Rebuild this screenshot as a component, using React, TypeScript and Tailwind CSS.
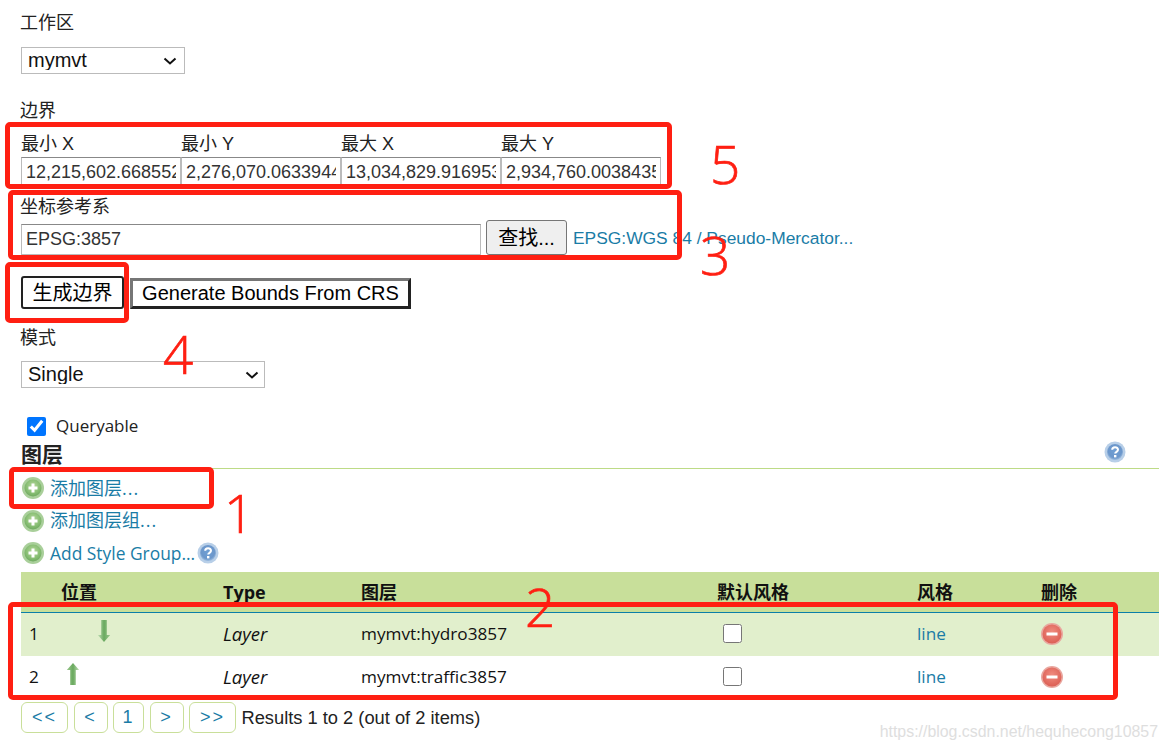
import React from "react";

const SANS = "font-['Liberation_Sans','Noto_Sans_CJK_SC',sans-serif]";
const HUMAN = "font-['Open_Sans','Noto_Sans_CJK_SC',sans-serif]";

function Plus({ id }: { id: string }) {
  return (
    <svg width="24" height="24" viewBox="0 0 24 24" className="shrink-0">
      <defs>
        <radialGradient id={id} cx="50%" cy="40%" r="60%">
          <stop offset="0%" stopColor="#b9d99f" />
          <stop offset="70%" stopColor="#86bd72" />
          <stop offset="100%" stopColor="#6ea95f" />
        </radialGradient>
      </defs>
      <circle cx="12" cy="12" r="11" fill="#a9cf9a" />
      <circle cx="12" cy="12" r="8.5" fill={`url(#${id})`} />
      <path d="M12 7.5v9M7.5 12h9" stroke="#fff" strokeWidth="3" />
    </svg>
  );
}

function Help({ id }: { id: string }) {
  return (
    <svg width="22" height="22" viewBox="0 0 22 22" className="shrink-0">
      <defs>
        <radialGradient id={id} cx="50%" cy="45%" r="55%">
          <stop offset="0%" stopColor="#6f9fd4" />
          <stop offset="75%" stopColor="#6c97cb" />
          <stop offset="100%" stopColor="#9dbde0" />
        </radialGradient>
      </defs>
      <circle cx="11" cy="11" r="10.5" fill="#b8cfe8" />
      <circle cx="11" cy="11" r="8" fill={`url(#${id})`} />
      <path d="M8.2 8.8c0-3.4 5.8-3.4 5.8 0 0 2-2.8 2-2.8 3.8" fill="none" stroke="#fff" strokeWidth="2" />
      <rect x="10" y="14" width="2.4" height="2.4" fill="#fff" />
    </svg>
  );
}

function Minus({ id }: { id: string }) {
  return (
    <svg width="22" height="22" viewBox="0 0 22 22">
      <defs>
        <radialGradient id={id} cx="50%" cy="40%" r="60%">
          <stop offset="0%" stopColor="#f08d80" />
          <stop offset="100%" stopColor="#dc5f55" />
        </radialGradient>
      </defs>
      <circle cx="11" cy="11" r="11" fill="#e9a79f" />
      <circle cx="11" cy="11" r="9.5" fill={`url(#${id})`} />
      <rect x="5.5" y="9.5" width="11" height="3" fill="#fff" />
    </svg>
  );
}

function Arrow({ id, up }: { id: string; up?: boolean }) {
  return (
    <svg width="14" height="24" viewBox="0 0 14 24" className={up ? "rotate-180" : ""}>
      <defs>
        <linearGradient id={id} x1="0" x2="1" y1="0" y2="0">
          <stop offset="0%" stopColor="#c2dfb6" />
          <stop offset="50%" stopColor="#6aa95f" />
          <stop offset="100%" stopColor="#9cc98f" />
        </linearGradient>
      </defs>
      <path d="M4.2 1h5.6v15h3.4L7 23 .8 16h3.4z" fill={`url(#${id})`} />
    </svg>
  );
}

function Chevron({ right }: { right: string }) {
  return (
    <svg width="14" height="8" viewBox="0 0 14 8" className={`absolute top-[10px] pointer-events-none ${right}`}>
      <path d="M1.5 1.5 7 6.5l5.5-5" fill="none" stroke="#111" strokeWidth="2" />
    </svg>
  );
}

function RedBox({ className }: { className: string }) {
  return <div className={`absolute border-[5px] border-[#ff1f12] rounded-[5px] ${className}`} />;
}

function RedNum({ n, className }: { n: string; className: string }) {
  return (
    <div className={`absolute text-[#ff1f12] text-[53px] leading-none font-light [-webkit-text-stroke:0.7px_#ff1f12] font-['Open_Sans',sans-serif] ${className}`}>
      {n}
    </div>
  );
}

const cols = "grid grid-cols-[40px_162px_138px_356px_200px_124px_118px]";

function Row({ pos, arrow, name, bg }: { pos: string; arrow: React.ReactNode; name: string; bg: string }) {
  return (
    <div className={`${cols} h-[43px] pb-[2px] items-center text-[17.2px] text-[#111] ${HUMAN} ${bg}`}>
      <div className="pl-2">{pos}</div>
      <div className="flex items-center -mt-[6px]">{arrow}</div>
      <div className="italic text-[18.5px]">Layer</div>
      <div>{name}</div>
      <div className="flex pl-[6px]">
        <input type="checkbox" className="w-[19px] h-[19px]" />
      </div>
      <div className="text-[#1a7ca6]">line</div>
      <div className="flex">
        <Minus id={`m${pos}`} />
      </div>
    </div>
  );
}

function Page({ children, w }: { children: string; w: string }) {
  return (
    <div className={`h-[31px] ${w} flex items-center justify-center border border-[#c9df9a] rounded-[6px] text-[#1a7ca6] text-[18px] tracking-[2px] ${SANS}`}>
      {children}
    </div>
  );
}

export default function App() {
  const bounds = [
    ["最小 X", "12,215,602.668552"],
    ["最小 Y", "2,276,070.063394412"],
    ["最大 X", "13,034,829.916953"],
    ["最大 Y", "2,934,760.003843512"],
  ];
  return (
    <div className={`relative w-[1168px] h-[752px] overflow-hidden bg-white pl-[21px] pr-[9px] pt-[12px] text-[18px] text-[#222] ${SANS}`}>
      <div className="h-[22px] leading-[22px] -ml-px">工作区</div>
      <div className="relative mt-[13px] w-[164px]">
        <select className="block appearance-none w-full h-[27px] border border-[#bbb] bg-white pl-[6px] pb-[2px] text-[20px] leading-none text-[#111]">
          <option>mymvt</option>
        </select>
        <Chevron right="right-[8px]" />
      </div>

      <div className="mt-[26px] h-[22px] leading-[22px] -ml-px">边界</div>
      <div className="mt-[11px] flex w-[640px]">
        {bounds.map(([l]) => (
          <div key={l} className="w-[160px] h-[22px] leading-[22px]">{l}</div>
        ))}
      </div>
      <div className="mt-[2px] flex w-[640px]">
        {bounds.map(([l, v]) => (
          <input
            key={l}
            readOnly
            value={v}
            className="w-[160px] h-[31px] border border-[#bbb] border-t-[#888] px-[4px] text-[18px] text-[#333] bg-white"
          />
        ))}
      </div>

      <div className="mt-[8px] h-[22px] leading-[22px] -ml-px">坐标参考系</div>
      <div className="flex items-end mt-[1px] h-[36px]">
        <input
          readOnly
          value="EPSG:3857"
          className="w-[460px] h-[31px] border border-[#bbb] border-t-[#888] px-[4px] text-[18px] text-[#333] bg-white"
        />
        <button className="ml-[5px] w-[81px] h-[35px] bg-[#efefef] border border-[#767676] rounded-[3px] text-[20px] text-black">查找...</button>
        <a className="ml-[6px] pb-[4px] text-[#1a7ca6] text-[17.4px]">EPSG:WGS 84 / Pseudo-Mercator...</a>
      </div>

      <div className="flex items-end mt-[20px] h-[34px]">
        <button className="w-[103px] h-[33px] bg-white border-2 border-[#222] rounded-[3px] text-[20px] leading-none text-black">生成边界</button>
        <button className="ml-[6px] w-[281px] h-[31px] bg-white border-[3px] border-[#222] border-t-[#767676] border-l-[#767676] text-[20px] leading-none pb-[2px] text-black">Generate Bounds From CRS</button>
      </div>

      <div className="mt-[18px] h-[22px] leading-[22px] -ml-px">模式</div>
      <div className="relative mt-[12px] w-[244px]">
        <select className="block appearance-none w-full h-[27px] border border-[#bbb] bg-white pl-[6px] pb-[2px] text-[20px] leading-none text-[#111]">
          <option>Single</option>
        </select>
        <Chevron right="right-[6px]" />
      </div>

      <div className={`flex items-center mt-[27px] ml-[6px] h-[22px] ${HUMAN}`}>
        <input type="checkbox" defaultChecked className="w-[19px] h-[19px]" />
        <span className="ml-[10px] text-[17px] leading-none pb-[1px] text-[#222]">Queryable</span>
      </div>

      <div className="relative mt-[5px] h-[26px] border-b border-[#bddb86] box-content">
        <div className="text-[21px] leading-[26px] font-bold text-[#222]">图层</div>
        <div className="absolute right-[33px] top-[-1px]">
          <Help id="h1" />
        </div>
      </div>

      <div className={`text-[18px] text-[#1a7ca6] ${HUMAN}`}>
        <div className="flex items-center h-[32px] mt-[3px]">
          <Plus id="p1" />
          <span className="ml-[5px]">添加图层<span className="tracking-[1px]">...</span></span>
        </div>
        <div className="flex items-center h-[33px]">
          <Plus id="p2" />
          <span className="ml-[5px]">添加图层组<span className="tracking-[1px]">...</span></span>
        </div>
        <div className="flex items-center h-[32px]">
          <Plus id="p3" />
          <span className="ml-[5px] text-[17.4px]">Add Style Group...</span>
          <span className="ml-[2px] flex"><Help id="h2" /></span>
        </div>
      </div>

      <div className={`${cols} mt-[3px] h-[33px] pt-[7px] bg-[#c8df9a] border-b border-[#0b7fa8] box-content text-[18px] font-bold text-[#111] ${HUMAN}`}>
        <div />
        <div>位置</div>
        <div>Type</div>
        <div>图层</div>
        <div>默认风格</div>
        <div>风格</div>
        <div>删除</div>
      </div>
      <Row pos="1" name="mymvt:hydro3857" bg="bg-[#e1efcc]" arrow={<div className="pl-[36px] flex"><Arrow id="a1" /></div>} />
      <Row pos="2" name="mymvt:traffic3857" bg="bg-white" arrow={<div className="pl-[5px] flex"><Arrow id="a2" up /></div>} />

      <div className="flex items-center mt-[3px] gap-[5.5px]">
        <Page w="w-[47px]">{"<<"}</Page>
        <Page w="w-[34px]">{"<"}</Page>
        <Page w="w-[31px]">1</Page>
        <Page w="w-[34px]">{">"}</Page>
        <Page w="w-[47px]">{">>"}</Page>
        <span className="text-[#222] text-[18.3px]">Results 1 to 2 (out of 2 items)</span>
      </div>

      <div className="absolute right-[10px] bottom-[8px] text-[15.9px] text-[#dedede]">https://blog.csdn.net/hequhecong10857</div>

      <RedBox className="left-[5px] top-[122px] w-[667px] h-[67px]" />
      <RedBox className="left-[8px] top-[190px] w-[674px] h-[70px]" />
      <RedBox className="left-[5px] top-[262px] w-[124px] h-[61px]" />
      <RedBox className="left-[9px] top-[467px] w-[205px] h-[42px]" />
      <RedBox className="left-[8px] top-[602px] w-[1110px] h-[98px]" />
      <RedNum n="5" className="left-[710px] top-[137px]" />
      <RedNum n="3" className="left-[700px] top-[228px]" />
      <RedNum n="4" className="left-[163px] top-[327px]" />
      <RedNum n="1" className="left-[224px] top-[486px]" />
      <RedNum n="2" className="left-[525px] top-[580px]" />
    </div>
  );
}
